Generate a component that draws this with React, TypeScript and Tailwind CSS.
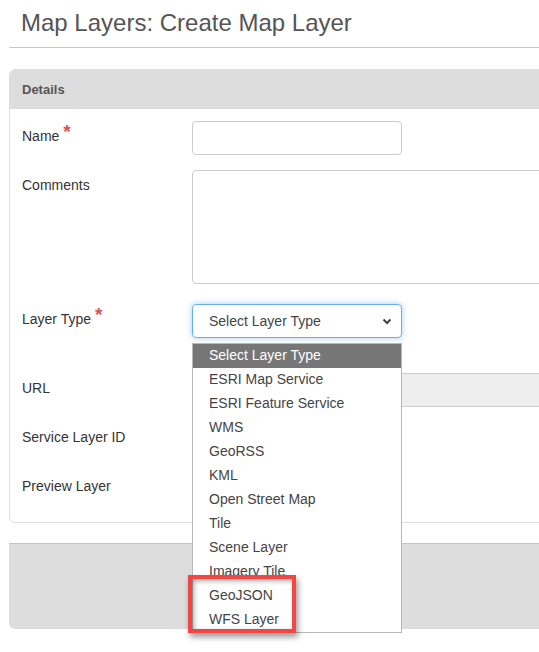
import React from "react";

const options = [
  "Select Layer Type",
  "ESRI Map Service",
  "ESRI Feature Service",
  "WMS",
  "GeoRSS",
  "KML",
  "Open Street Map",
  "Tile",
  "Scene Layer",
  "Imagery Tile",
  "GeoJSON",
  "WFS Layer",
];

function Req() {
  return <span className="ml-[4px] text-[#d9534f] text-[19px] leading-[10px] font-bold relative -top-[3px]">*</span>;
}

export default function App() {
  return (
    <div
      className="relative w-[539px] h-[652px] overflow-hidden bg-white text-[#333]"
      style={{ fontFamily: '"Liberation Sans", Arial, sans-serif' }}
    >
      <h1 className="pl-[21px] pt-[9px] text-[24px] leading-[28px] text-[#555] font-normal">
        Map Layers: Create Map Layer
      </h1>
      <div className="ml-[9px] mt-[10px] border-t border-[#c8c8c8] w-[620px]" />

      <div className="ml-[9px] mt-[21px] w-[620px] border border-[#dddddd] rounded-[6px] overflow-hidden">
        <div className="h-[39px] bg-[#dddddd] flex items-center pl-[12px] text-[13px] font-bold text-[#555]">
          Details
        </div>
        <div className="pt-[12px] pb-[17px] pl-[12px] flex flex-col gap-[15px] text-[14px]">
          <div className="flex">
            <div className="w-[170px] pt-[5px] leading-[20px]">
              Name
              <Req />
            </div>
            <div className="w-[210px] h-[34px] border border-[#cccccc] rounded-[4px]" />
          </div>
          <div className="flex">
            <div className="w-[170px] pt-[5px] leading-[20px]">Comments</div>
            <div className="w-[420px] h-[114px] border border-[#cccccc] rounded-[4px]" />
          </div>
          <div className="flex mt-[5px]">
            <div className="w-[170px] pt-[5px] leading-[20px]">
              Layer Type
              <Req />
            </div>
            <div className="w-[210px] h-[34px] border border-[#66afe9] rounded-[4px] shadow-[0_0_6px_rgba(102,175,233,0.6)] flex items-center justify-between pl-[16px] pr-[8px] text-[14px] text-[#444]">
              <span>Select Layer Type</span>
              <svg width="12" height="12" viewBox="0 0 12 12">
                <path d="M2.5 4.5 L6 8 L9.5 4.5" fill="none" stroke="#444" strokeWidth="2" />
              </svg>
            </div>
          </div>
          <div className="flex mt-[20px]">
            <div className="w-[170px] pt-[5px] leading-[20px]">URL</div>
            <div className="w-[420px] h-[34px] border border-[#cccccc] rounded-[4px] bg-[#eeeeee]" />
          </div>
          <div className="flex">
            <div className="w-[170px] pt-[5px] leading-[20px]">Service Layer ID</div>
            <div className="w-[210px] h-[34px]" />
          </div>
          <div className="flex">
            <div className="w-[170px] pt-[5px] leading-[20px]">Preview Layer</div>
            <div className="w-[210px] h-[34px]" />
          </div>
        </div>
      </div>

      <div className="ml-[9px] mt-[20px] w-[620px] h-[86px] bg-[#dddddd] border-t border-[#c4c4c4] rounded-b-[6px]" />

      <div className="absolute left-[192px] top-[343px] w-[210px] border border-[#b8b8b8] bg-white text-[14px] text-[#444]">
        {options.map((o, i) => (
          <div
            key={o}
            className={
              i === 0
                ? "h-[24px] leading-[22px] pl-[16px] bg-[#767676] text-white"
                : "h-[24px] leading-[22px] pl-[16px]"
            }
          >
            {o}
          </div>
        ))}
      </div>

      <div className="absolute left-[188px] top-[575px] w-[108px] h-[58px] border-[4px] border-[#f44545] shadow-[2px_4px_6px_rgba(0,0,0,0.4),inset_2px_2px_5px_rgba(0,0,0,0.35)]" />
    </div>
  );
}
